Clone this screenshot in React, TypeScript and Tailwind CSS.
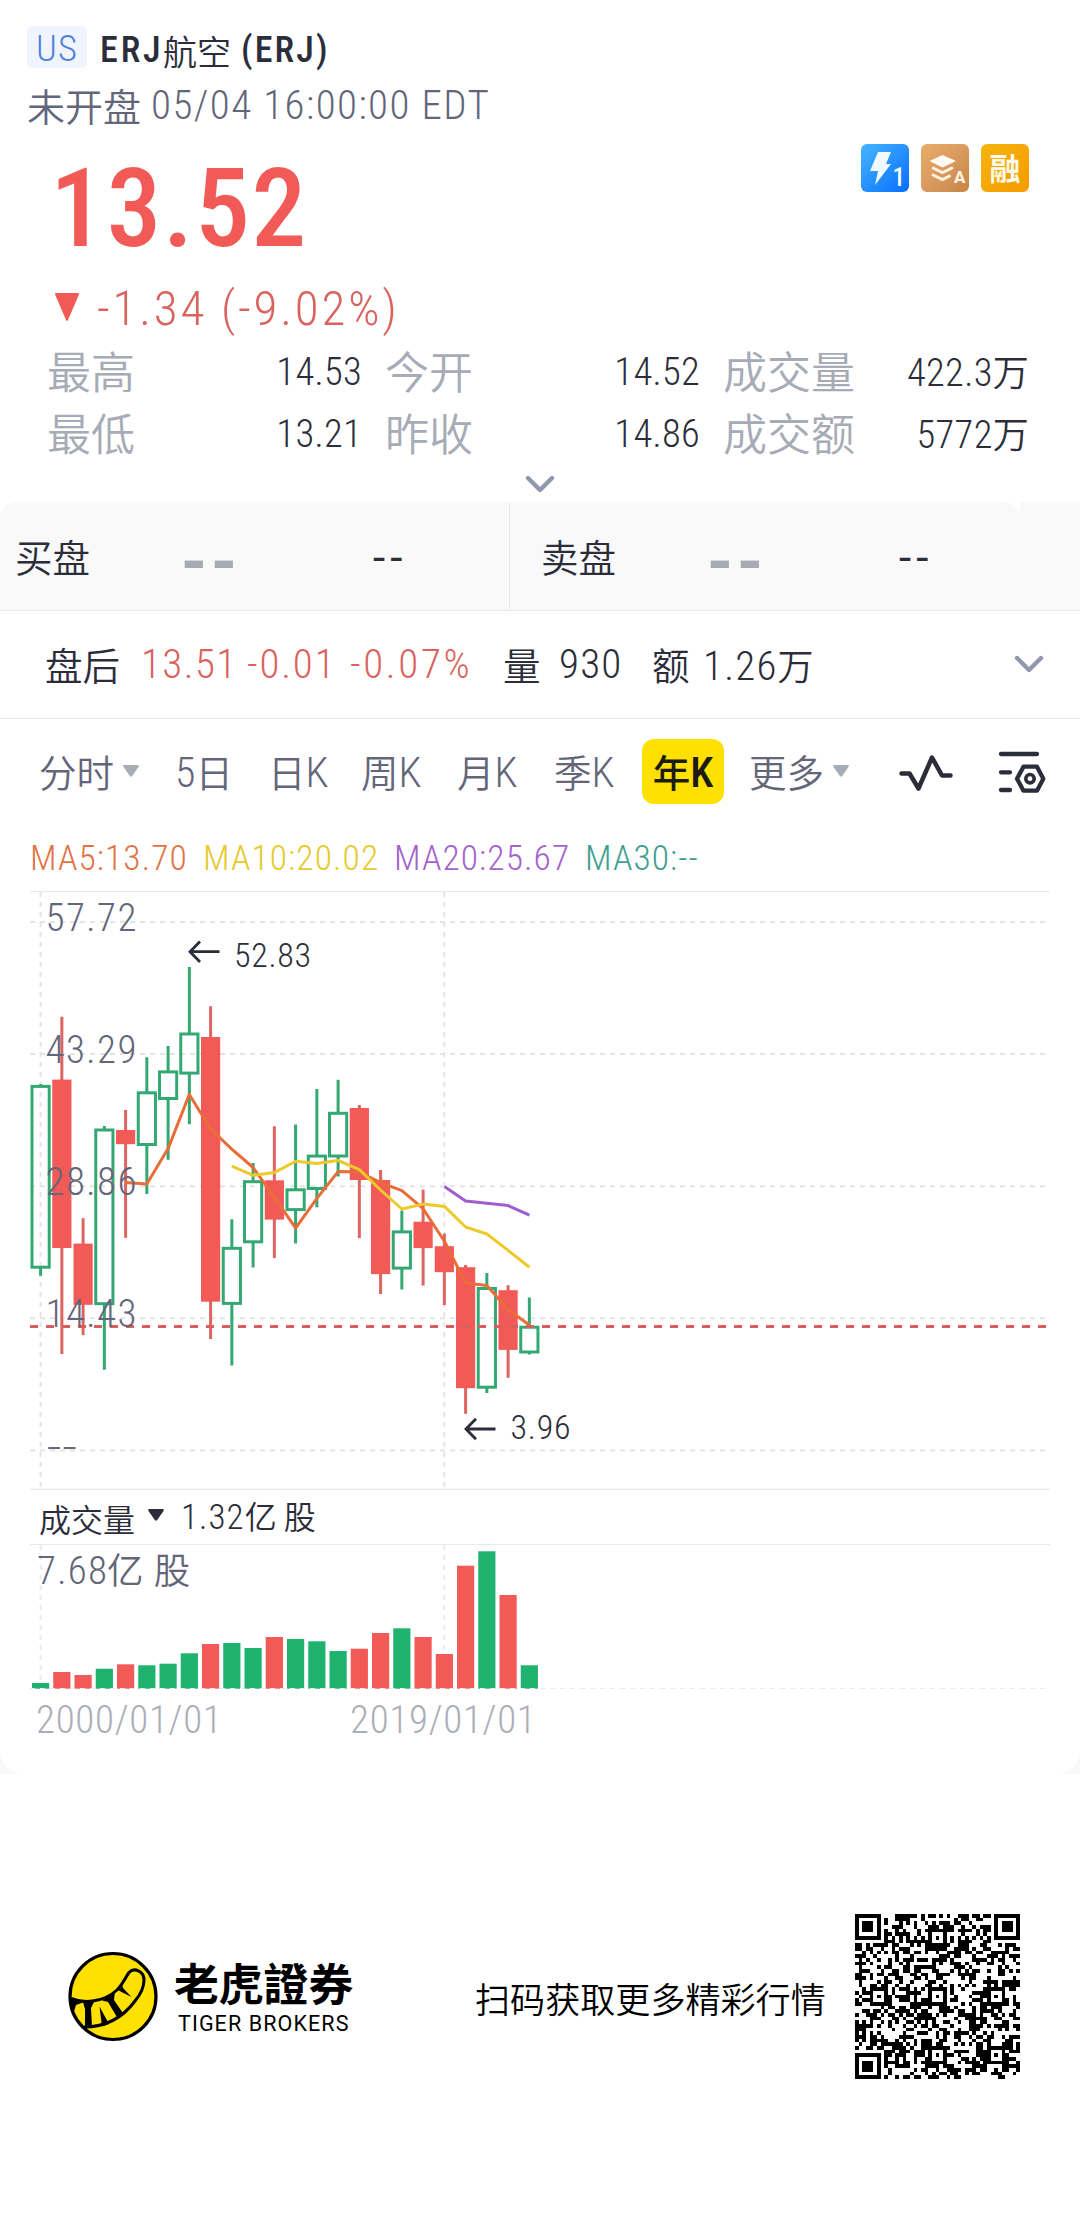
import clsx from "clsx";

const DIN = "font-['Roboto_Condensed','Noto_Sans_CJK_SC',sans-serif] font-[350]";
const CJK = "font-['Noto_Sans_CJK_SC',sans-serif] font-[350]";

const RED = "#f25a57";
const GREEN = "#20b26f";

interface Candle {
    up: boolean;
    high: number;
    top: number;
    bottom: number;
    low: number;
    vol: number;
}

// [up, high, body top, body bottom, low, volume bar top]
const rows: [number, number, number, number, number, number][] = [
    [1, 1084, 1085, 1268.6, 1275.7, 1683],
    [0, 1016.7, 1079.6, 1248, 1354.1, 1672],
    [0, 1218.2, 1243.6, 1304.8, 1335.2, 1675],
    [1, 1125.9, 1128.6, 1305.1, 1369.7, 1668.7],
    [0, 1110, 1130, 1144.2, 1237.8, 1664.3],
    [1, 1057.3, 1091.4, 1145.9, 1193.9, 1665.3],
    [1, 1046.1, 1070.5, 1099.9, 1159.7, 1663.7],
    [1, 967, 1032.6, 1074.5, 1124.2, 1653.3],
    [0, 1006.2, 1037, 1301.7, 1338.9, 1644],
    [1, 1219.2, 1246.9, 1304.8, 1365.6, 1643],
    [1, 1163.1, 1180.3, 1243.2, 1267.6, 1648],
    [0, 1126.3, 1180.3, 1219.6, 1258.1, 1637],
    [1, 1124.5, 1188.4, 1211, 1243.5, 1639],
    [1, 1088.9, 1154.7, 1189.9, 1207.2, 1641.3],
    [1, 1079.7, 1111.9, 1157.4, 1176.5, 1651],
    [0, 1105, 1108, 1180, 1238.2, 1648.7],
    [0, 1170, 1180, 1274.1, 1294, 1633],
    [1, 1210.6, 1230.5, 1269.5, 1289.4, 1628.3],
    [0, 1189.6, 1221.7, 1248.1, 1285.6, 1637],
    [0, 1233.6, 1246.2, 1272.2, 1305.1, 1654],
    [0, 1264.9, 1267.2, 1388.2, 1413.8, 1565.7],
    [1, 1273, 1287.1, 1388.6, 1393.1, 1551.3],
    [0, 1285.2, 1290.2, 1349.9, 1377.8, 1595],
    [1, 1297.5, 1325.8, 1353.4, 1354.5, 1665.3],
];

const candles: Candle[] = rows.map(([up, high, top, bottom, low, vol]) => ({
    up: up === 1,
    high,
    top,
    bottom,
    low,
    vol,
}));

const cx = (i: number) => 40.6 + i * 21.25;

const line = (start: number, ys: number[]) =>
    ys.map((y, i) => `${cx(start + i).toFixed(1)},${y}`).join(" ");

const ma5 = line(4, [
    1182.4, 1184.1, 1148.6, 1094.5, 1129, 1149.2, 1167.5, 1197.3, 1228.1, 1198.4,
    1171.6, 1172, 1182.7, 1190.7, 1208.7, 1241.2, 1283, 1285.6, 1309.7, 1325,
]);
const ma10 = line(9, [
    1166.1, 1175.3, 1172.6, 1161.3, 1163.5, 1160.5, 1169.7, 1190, 1209, 1204.1,
    1206.4, 1227, 1234, 1250.4, 1267.2,
]);
const ma20 = line(19, [1186.5, 1201, 1203.3, 1205.6, 1215.2]);

const priceLevels = [
    { y: 922, label: "57.72" },
    { y: 1053.9, label: "43.29" },
    { y: 1186.2, label: "28.86" },
    { y: 1318.3, label: "14.43" },
];

const stats = [
    [
        { label: "最高", value: "14.53" },
        { label: "今开", value: "14.52" },
        { label: "成交量", value: "422.3万" },
    ],
    [
        { label: "最低", value: "13.21" },
        { label: "昨收", value: "14.86" },
        { label: "成交额", value: "5772万" },
    ],
];

const tabs = [
    { label: "分时", width: "w-[136px]", menu: true },
    { label: "5日", width: "w-[93px]" },
    { label: "日K", width: "w-[93px]" },
    { label: "周K", width: "w-[96px]" },
    { label: "月K", width: "w-[97px]" },
    { label: "季K", width: "w-[88px]" },
    { label: "年K", width: "w-[82px]", active: true },
    { label: "更多", width: "w-[124px]", menu: true },
];

const averages = [
    { text: "MA5:13.70", className: "w-[173px] text-[#df7345]" },
    { text: "MA10:20.02", className: "w-[191px] text-[#e6c92c]" },
    { text: "MA20:25.67", className: "w-[191px] text-[#a363ce]" },
    { text: "MA30:--", className: "text-[#3f9e92]" },
];

function Chevron({ className }: { className?: string }) {
    return (
        <svg viewBox="0 0 30 18" className={clsx("h-[18px] w-[30px]", className)} fill="none">
            <path d="M3 3 15 15 27 3" stroke="#9197ae" strokeWidth="4.400" strokeLinecap="round" strokeLinejoin="round" />
        </svg>
    );
}

function Caret({ className }: { className?: string }) {
    return (
        <svg viewBox="0 0 16 12" className={clsx("h-[12px] w-[16px]", className)}>
            <path d="M1.500 0h13q2 0 1 2L9.200 11q-1.200 1.600-2.400 0L.5 2Q-.5 0 1.500 0Z" fill="currentColor" />
        </svg>
    );
}

function Header() {
    return (
        <header>
            <div className="flex h-[68px] items-end pl-[27px]">
                <span className={clsx(DIN, "h-[42px] w-[60px] rounded-md bg-[#eff4ff] text-center text-[36.500px] leading-[45px] tracking-[0.03em] text-[#4f80dd]")}>
                    US
                </span>
                <h1 className="ml-[13px] flex h-[36px] items-center text-[#2b2d3a]">
                    <span className={clsx(DIN, "w-[63px] text-[36px] tracking-[0.08em] !font-medium")}>ERJ</span>
                    <span className={clsx(CJK, "text-[34px]")}>航空</span>
                    <span className={clsx(DIN, "pl-[10px] text-[36px] tracking-[0.06em] !font-medium")}>(ERJ)</span>
                </h1>
            </div>
            <div className="mt-[17px] flex h-[42px] items-center pl-[27px] text-[#636679]">
                <span className={clsx(CJK, "-mt-[4px] text-[38px]")}>未开盘</span>
                <span className={clsx(DIN, "pl-[10px] text-[41px] tracking-[0.035em]")}>05/04 16:00:00 EDT</span>
            </div>
            <div className="mt-[17px] flex h-[129px] justify-between pr-[51px] pl-[50px]">
                <span className={clsx(DIN, "text-[110px] leading-[129px] tracking-[0.013em] !font-medium text-[#f25a57]")}>13.52</span>
                <div className="flex gap-[12px]">
                    <span className="h-[48px] w-[48px] rounded-md bg-linear-to-br from-[#46b4ff] to-[#0a6cff]">
                        <svg viewBox="0 0 48 48">
                            <path d="M17 8h13l-5 12h5L14 41l3-14H9Z" fill="#f0faff" />
                            <text x="31.500" y="42" fontSize="25" fontWeight="500" fill="#f0faff" fontFamily="Roboto Condensed">1</text>
                        </svg>
                    </span>
                    <span className="h-[48px] w-[48px] rounded-md bg-linear-to-br from-[#e9ad66] via-[#d99a60] to-[#c68543]">
                        <svg viewBox="0 0 48 48" fill="none">
                            <path d="M8.500 17 21.500 11 35 17 21.500 23.500Z" fill="#fffaf3" />
                            <path d="m11 23.500 10.500 5 10.500-5M11 30.500l10.500 5 8-4" stroke="#fff1dc" strokeWidth="3" />
                            <text x="33" y="39" fontSize="17" fontWeight="700" fill="#fff6e8" fontFamily="Roboto">A</text>
                        </svg>
                    </span>
                    <span className="h-[48px] w-[48px] rounded-md bg-linear-to-br from-[#f5b50d] to-[#f69a00] text-center font-['Noto_Sans_CJK_SC',sans-serif] text-[31px] leading-[46px] font-bold text-[#fffbea]">
                        融
                    </span>
                </div>
            </div>
            <div className="mt-[6px] flex h-[60px] items-center pl-[55px] text-[#d9635f]">
                <svg viewBox="0 0 24 28" className="-mt-[4px] h-[28px] w-[24px]">
                    <path d="M1 0h22q1.500 0 .8 1.800L13 27q-1 2-2 0L.2 1.800Q-.5 0 1 0Z" fill={RED} />
                </svg>
                <span className={clsx(DIN, "pl-[18px] text-[49px] tracking-[0.058em]")}>-1.34 (-9.02%)</span>
            </div>
            {stats.map((row) => (
                <div key={row[0].label} className="flex h-[62px] gap-[22px] pl-[47px]">
                    {row.map(({ label, value }, i) => (
                        <div key={label} className={clsx("flex items-center justify-between", i === 2 ? "w-[306px]" : "w-[315px] mr-px")}>
                            <span className={clsx(CJK, "text-[44px] text-[#a6abb6]")}>{label}</span>
                            <span className={clsx(DIN, "text-[38.500px] tracking-[0.008em] text-[#2b2d3a]", i === 2 ? "pt-[6px]" : "pt-[3px]")}>
                                {value.replace("万", "")}
                                {value.endsWith("万") && <span className="text-[36px]">万</span>}
                            </span>
                        </div>
                    ))}
                </div>
            ))}
            <div className="flex h-[39px] justify-center pt-[12px]">
                <Chevron />
            </div>
        </header>
    );
}

function QuoteSide({ label, className }: { label: string; className?: string }) {
    return (
        <div className={clsx("flex h-full items-center", className)}>
            <span className={clsx(CJK, "w-[166px] text-[37.500px] text-[#2b2d3a]")}>{label}</span>
            <span className="w-[192px] pt-[13px] font-['Roboto',sans-serif] text-[66px] leading-none font-bold tracking-[4px] text-[#a6abb6]">--</span>
            <span className="pt-[4px] font-['Roboto',sans-serif] text-[44px] leading-none font-normal tracking-[5px] text-[#2b2d3a]">--</span>
        </div>
    );
}

function Quotes() {
    return (
        <section className="flex h-[109px] border-b border-[#e8e9ea]">
            <div className="flex w-[1020px] rounded-t-[16px] bg-[#f9f9f9]">
                <QuoteSide label="买盘" className="w-[510px] border-r border-[#e8e9ea] pl-[15px]" />
                <QuoteSide label="卖盘" className="pl-[31px]" />
            </div>
            <div className="flex-1 bg-[#f9f9f9]" />
        </section>
    );
}

function AfterHours() {
    return (
        <section className="flex h-[108px] items-center border-b border-[#e8e9ea] pl-[45px] text-[#2b2d3a]">
            <span className={clsx(CJK, "w-[96px] text-[37.500px]")}>盘后</span>
            <div className={clsx(DIN, "flex text-[41px] tracking-[0.035em] text-[#d9635f]")}>
                <span className="w-[106px]">13.51</span>
                <span className="w-[103px] tracking-[0.045em]">-0.01</span>
                <span className="w-[153px] tracking-[0.065em]">-0.07%</span>
            </div>
            <span className={clsx(CJK, "w-[56px] text-[37.500px]")}>量</span>
            <span className={clsx(DIN, "w-[93px] text-[41px] tracking-[0.03em]")}>930</span>
            <span className={clsx(CJK, "w-[51px] text-[37.500px]")}>额</span>
            <span className={clsx(DIN, "pt-[4px] text-[41px] tracking-[0.03em]")}>1.26<span className="text-[36px]">万</span></span>
            <Chevron className="-mt-[2px] mr-[36px] ml-auto" />
        </section>
    );
}

function Tabs() {
    return (
        <nav className="flex h-[105px] items-center pl-[39px] text-[#636679]">
            {tabs.map((tab) => (
                <div
                    key={tab.label}
                    className={clsx(
                        DIN,
                        "flex items-center text-[37.500px]",
                        tab.width,
                        tab.active && "mr-[25px] h-[65px] justify-center rounded-[12px] bg-[#fee100] !font-medium text-[#1c1b12]"
                    )}
                >
                    <span className="pt-[4px] leading-[60px] [&>i]:text-[42px] [&>i]:not-italic">
                        {[...tab.label].map((ch) => (ch === "K" || ch === "5" ? <i key={ch}>{ch}</i> : ch))}
                    </span>
                    {tab.menu && <Caret className="-mt-[1px] ml-[9px] text-[#a6abb6]" />}
                </div>
            ))}
            <svg viewBox="898 750 58 46" className="ml-[24px] h-[46px] w-[58px]" fill="none" stroke="#2b2d3a" strokeWidth="4.500" strokeLinecap="round" strokeLinejoin="round">
                <path d="M902.500 774.500h8l9 15 13.500-31 10 18h8.500" />
            </svg>
            <svg viewBox="998 750 50 46" className="ml-[42px] h-[46px] w-[50px]" fill="none" stroke="#2b2d3a" strokeWidth="4.300" strokeLinecap="round" strokeLinejoin="round">
                <path d="M1002 755h36M1002 773.300h9M1002 791h9M1018 779.700l6.500-12h13.500l6.300 12-6.300 12h-13.500Z" />
                <circle cx="1031" cy="779.700" r="4.200" strokeWidth="3.600" />
            </svg>
        </nav>
    );
}

function Averages() {
    return (
        <div className={clsx(DIN, "flex h-[66px] items-center pt-[4px] pl-[30px] text-[35.500px] tracking-[0.03em]")}>
            {averages.map((item) => (
                <span key={item.text} className={item.className}>{item.text}</span>
            ))}
        </div>
    );
}

function PriceChart() {
    return (
        <svg viewBox="0 890 1080 600" className="block h-[600px] w-[1080px]" fill="none">
            <path d="M30 891.500h1020M30 1489.300h1020" stroke="#e8e9ea" strokeWidth="1.200" />
            <g stroke="#e4e4e6" strokeWidth="2" strokeDasharray="5 5">
                {[...priceLevels.map((l) => l.y), 1450.5].map((y) => (
                    <path key={y} d={`M30 ${y}h1020`} />
                ))}
                <path d="M40.600 892V1488M444.300 892V1488" />
            </g>

            {candles.map((c, i) => {
                const x = cx(i);
                return c.up ? (
                    <g key={i} stroke="#34a873" strokeWidth="3">
                        <path d={`M${x} ${c.high}V${c.top + 1}M${x} ${c.bottom - 1}V${c.low}`} />
                        <rect x={x - 8.6} y={c.top + 1.4} width="17.200" height={c.bottom - c.top - 2.8} />
                    </g>
                ) : (
                    <g key={i}>
                        <path d={`M${x} ${c.high}V${c.low}`} stroke="#dd6561" strokeWidth="3" />
                        <rect x={x - 9.6} y={c.top} width="19.200" height={c.bottom - c.top} fill={RED} />
                    </g>
                );
            })}

            <path d="M30 1326.500h1018" stroke="#da5f5c" strokeWidth="3" strokeDasharray="8 8" />
            <g strokeWidth="3" strokeLinejoin="round">
                <polyline points={ma5} stroke="#ea6c38" />
                <polyline points={ma10} stroke="#edc92c" />
                <polyline points={ma20} stroke="#a05cd0" />
            </g>

            <g className="font-['Roboto_Condensed',sans-serif] font-[350]" fill="#636679" fontSize="39">
                {priceLevels.map(({ y, label }) => (
                    <text key={label} x="45.500" y={y + 8.7} textLength="91">{label}</text>
                ))}
                <text x="46.500" y="1459.500" textLength="31" lengthAdjust="spacingAndGlyphs">--</text>
            </g>
            <g className="font-['Roboto_Condensed',sans-serif] font-[350]" fill="#2b2d3a" fontSize="34">
                <text x="234" y="966.500" textLength="77">52.83</text>
                <text x="510.500" y="1439" textLength="60">3.96</text>
            </g>
            <g stroke="#2b2d3a" strokeWidth="2.800">
                <path d="M219.500 951.700H190M200 941.500l-10 10.200 10 10.200" />
                <path d="M495.500 1429H466M476 1418.800l-10 10.200 10 10.200" />
            </g>
        </svg>
    );
}

function Volume() {
    return (
        <section>
            <div className="flex h-[54px] items-center pl-[39px] text-[#2b2d3a]">
                <span className={clsx(CJK, "pt-[2px] text-[32px]")}>成交量</span>
                <Caret className="-mt-[5px] ml-[13px]" />
                <span className={clsx(DIN, "pt-[3px] pl-[17px] text-[35px] tracking-[0.03em] whitespace-pre")}>1.32<span className="text-[32px] tracking-normal">亿 股</span></span>
            </div>
            <svg viewBox="0 1544 1080 148" className="block h-[148px] w-[1080px]" fill="none">
                <path d="M30 1544.500h1020" stroke="#e8e9ea" strokeWidth="1.200" />
                <path d="M40.600 1545V1688M444.300 1545V1688" stroke="#ebebed" strokeWidth="2" strokeDasharray="5 5" />
                {candles.map((c, i) => (
                    <rect key={i} x={cx(i) - 8.6} y={c.vol} width="17.200" height={1688.7 - c.vol} fill={c.up ? GREEN : RED} />
                ))}
                <path d="M30 1688.500h1020" stroke="#ebebed" strokeWidth="1.200" strokeDasharray="5 5" />
                <g className="font-['Roboto_Condensed','Noto_Sans_CJK_SC',sans-serif] font-[350]" fill="#636679">
                    <text x="37" y="1584" fontSize="39" textLength="70">7.68</text>
                    <text x="107" y="1584" fontSize="36.500" letterSpacing="1">亿 股</text>
                </g>
            </svg>
            <div className={clsx(DIN, "flex h-[54px] items-center pt-[2px] pl-[36px] text-[39px] tracking-[0.018em] text-[#aaaeb9]")}>
                <span className="w-[314px]">2000/01/01</span>
                <span>2019/01/01</span>
            </div>
        </section>
    );
}

function Logo() {
    return (
        <svg viewBox="0 0 100 100" className="h-[100px] w-[100px]">
            <circle cx="49" cy="49.500" r="43" fill="#fee100" stroke="#000" strokeWidth="3.200" />
            <path
                d="M7 51.500C20 57 40 55 53 43 60 36 61 31 65 25.500 70 20 80 24 80 33 80 40 76 48 71 54 60 69 45 80 20 80"
                fill="none"
                stroke="#000"
                strokeWidth="3"
            />
            <path d="M6 50 19 55.500 12 58 9 68 6 60ZM19 55h11l-3 6 1 19h-7V62ZM35.500 59.500 45 77l-7 2.500ZM38 53.500 51 44l-1 9 9.500 14-6 4L44 55ZM54 43l5-4v2l8.500 9-10-5Z" />
        </svg>
    );
}

const SIZE = 45;

function buildQr() {
    const inFinder = (r: number, c: number) => {
        const y = r > 22 ? SIZE - 1 - r : r;
        const x = c > 22 ? SIZE - 1 - c : c;
        if (x > 7 || y > 7 || (r > 22 && c > 22)) return null;
        if (x === 7 || y === 7) return false;
        const d = Math.max(Math.abs(x - 3), Math.abs(y - 3));
        return d !== 2;
    };
    const marks = [[6, 22], [22, 6], [22, 22], [22, 38], [38, 22], [38, 38]];
    let seed = 7;
    let d = "";
    for (let r = 0; r < SIZE; r++) {
        for (let c = 0; c < SIZE; c++) {
            seed = (seed * 48271) % 2147483647;
            let on = seed % 100 < 50;
            if (r === 6 || c === 6) on = (r + c) % 2 === 0;
            for (const [y, x] of marks) {
                const dist = Math.max(Math.abs(r - y), Math.abs(c - x));
                if (dist <= 2) on = dist !== 1;
            }
            on = inFinder(r, c) ?? on;
            if (on) d += `M${c} ${r}h1v1h-1z`;
        }
    }
    return d;
}

const qr = buildQr();

function Footer() {
    return (
        <footer className="flex h-[447px] items-start bg-white pl-[64px]">
            <div className="mt-[173px] flex w-[411px] items-center">
                <Logo />
                <div className="ml-[10px] w-[190px]">
                    <p className="font-['Noto_Sans_CJK_TC',sans-serif] text-[44.800px] leading-[50px] font-bold text-black">老虎證券</p>
                    <p className="pt-[4px] pl-[4px] font-['Roboto',sans-serif] text-[21.500px] leading-[26px] tracking-[1.1px] text-black">TIGER BROKERS</p>
                </div>
            </div>
            <p className={clsx(CJK, "mt-[199px] w-[380px] text-[35.100px] leading-[50px] text-black")}>扫码获取更多精彩行情</p>
            <svg viewBox="0 0 45 45" className="mt-[140px] h-[165px] w-[165px]" shapeRendering="crispEdges">
                <path d={qr} fill="#000" />
            </svg>
        </footer>
    );
}

export default function App() {
    return (
        <div className="w-[1080px] bg-white">
            <div className="bg-[#f8f8f8]">
                <main className="h-[1774px] rounded-b-[24px] bg-white">
                    <Header />
                    <Quotes />
                    <AfterHours />
                    <Tabs />
                    <Averages />
                    <PriceChart />
                    <Volume />
                </main>
            </div>
            <Footer />
        </div>
    );
}
